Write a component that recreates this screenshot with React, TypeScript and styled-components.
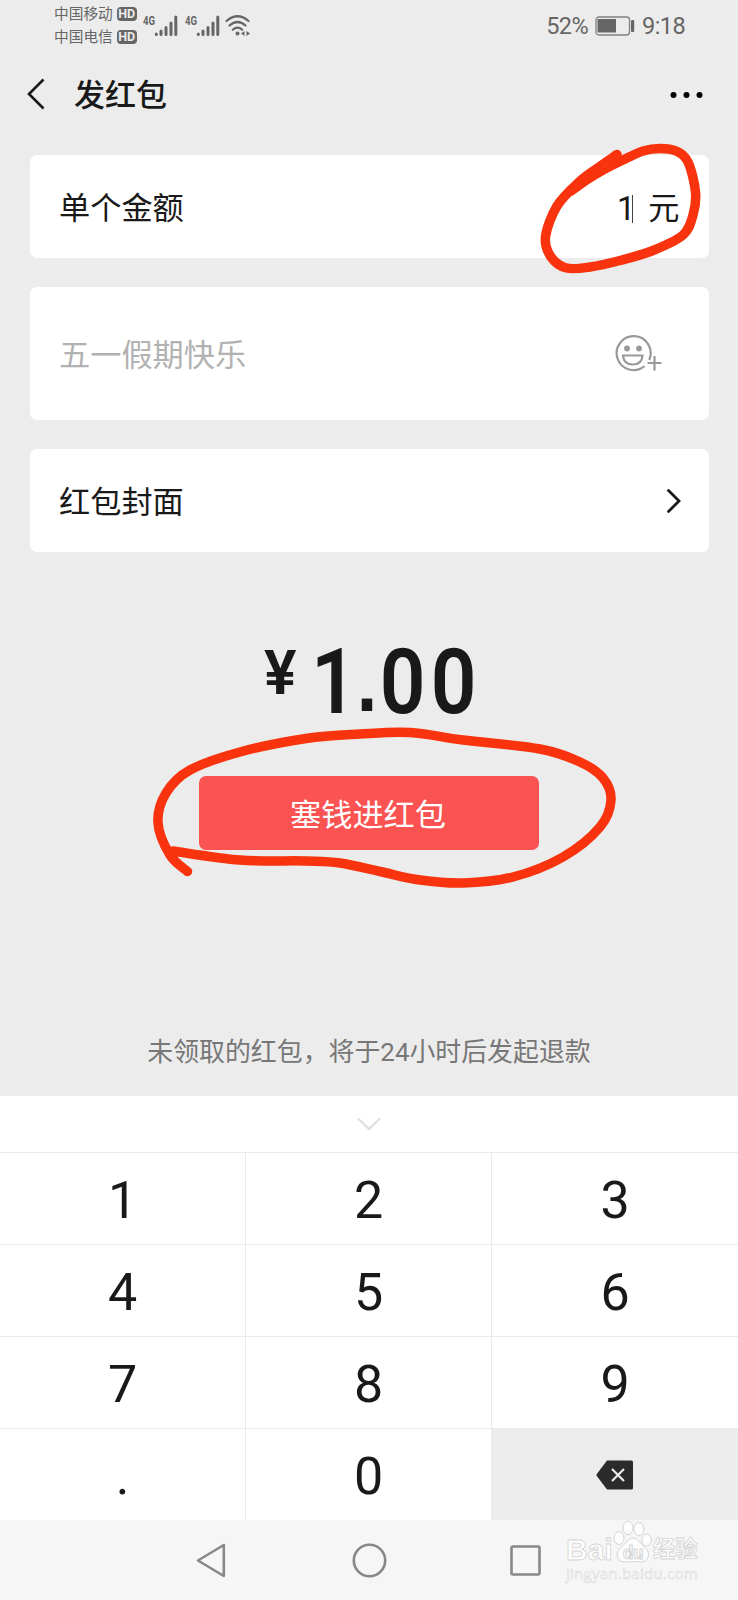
import React from "react";
import styled, { createGlobalStyle } from "styled-components";

const GlobalStyle = createGlobalStyle`
  * { box-sizing: border-box; }
  body {
    margin: 0;
    background: #ececec;
    font-family: Roboto, "Noto Sans CJK SC", sans-serif;
    color: #191919;
  }
  svg { display: block; }
`;

const Screen = styled.div`
  position: relative;
  display: flex;
  flex-direction: column;
  width: 738px;
  height: 1600px;
  overflow: hidden;
  background: #ececec;
`;

const StatusBar = styled.header`
  display: flex;
  align-items: center;
  height: 50px;
  padding: 1px 53px 0 54px;
  color: #666;
`;

const Carriers = styled.div`
  display: flex;
  flex-direction: column;
`;

const Carrier = styled.div`
  display: flex;
  align-items: center;
  gap: 4px;
  height: 22.5px;
  font-size: 14.7px;
  line-height: 22px;
`;

const HdBadge = styled.span`
  display: flex;
  align-items: center;
  justify-content: center;
  width: 20px;
  height: 14px;
  border-radius: 4px;
  background: #666;
  color: #ececec;
  font-size: 12.5px;
  font-weight: 700;
  line-height: 14px;
`;

const Signals = styled.div`
  display: flex;
  flex: 1;
  margin-left: 6px;
`;

const Clock = styled.div`
  display: flex;
  align-items: center;
  font-size: 23.5px;
  letter-spacing: -0.6px;
`;

const BatteryIcon = styled.svg`
  margin: 0 7px 0 7px;
`;

const TitleBar = styled.nav`
  display: flex;
  align-items: center;
  height: 105px;
  padding: 0 34px 17px 26px;
`;

const Title = styled.h1`
  flex: 1;
  margin: 4px 0 0 26px;
  font-size: 31px;
  font-weight: 500;
  line-height: 44px;
`;

const Form = styled.main`
  display: flex;
  flex-direction: column;
  gap: 29.5px;
  padding: 0 29px 0 29.5px;
`;

const Card = styled.section<{ $height: number }>`
  display: flex;
  align-items: center;
  justify-content: space-between;
  height: ${(p) => p.$height}px;
  padding: 5px 29.5px 0 29.5px;
  border-radius: 7px;
  background: #fff;
  font-size: 31.2px;
  line-height: 44px;
`;

const Placeholder = styled.span`
  padding-top: 1px;
  color: #b2b2b2;
`;

const AmountField = styled.div`
  display: flex;
  align-items: center;
`;

const Digits = styled.span`
  font-size: 32.5px;
`;

const Caret = styled.span`
  width: 1px;
  height: 28px;
  margin: 0 15px 0 -3px;
  background: #444;
`;

const ArrowIcon = styled.svg`
  margin: -4px -1.5px 0 0;
`;

const SmileyIcon = styled.svg`
  margin-top: -1px;
`;

const Total = styled.div`
  display: flex;
  justify-content: center;
  height: 106px;
  margin-top: 77px;
  font-weight: 600;
`;

const Currency = styled.span`
  margin-right: 14.5px;
  font-size: 61px;
  line-height: 89px;
`;

const Sum = styled.span`
  display: flex;
  width: 163px;
  font-size: 91px;
  line-height: 106px;
  transform: scaleX(0.88);
  transform-origin: left;
`;

const Cents = styled.span`
  letter-spacing: 6px;
`;

const DecimalPoint = styled.span`
  flex: none;
  width: 26px;
  font-family: "Liberation Sans", sans-serif;
  font-size: 84px;
  font-weight: 700;
`;

const SendButton = styled.button`
  align-self: center;
  width: 340px;
  height: 74px;
  margin: 40.5px 0 0;
  padding: 0 2px 0 0;
  border: 0;
  border-radius: 7px;
  background: #fb5252;
  color: #fff;
  font: inherit;
  font-size: 31.2px;
`;

const Notice = styled.p`
  margin: 183px 0 0;
  height: 63px;
  color: #777;
  font-size: 25.9px;
  line-height: 38px;
  text-align: center;
`;

const Keyboard = styled.div`
  display: flex;
  flex-direction: column;
  height: 424px;
  background: #fff;
`;

const Collapse = styled.div`
  display: flex;
  justify-content: center;
  height: 56px;
  padding-top: 20px;
`;

const Keys = styled.div`
  display: grid;
  grid-template-columns: 246px 246px 246px;
  grid-auto-rows: 92px;
`;

const Key = styled.div<{ $filled?: boolean }>`
  display: flex;
  align-items: center;
  justify-content: center;
  padding-top: ${(p) => (p.$filled ? 1 : 6)}px;
  border-top: 1px solid #ebebeb;
  border-right: 1px solid #ebebeb;
  background: ${(p) => (p.$filled ? "#ececec" : "#fff")};
  font-size: 52px;
  line-height: 60px;
  &:nth-child(3n) { border-right: 0; }
`;

const NavBar = styled.footer`
  display: flex;
  align-items: center;
  height: 80px;
  padding-left: 195px;
  background: #f6f6f6;
`;

const HomeIcon = styled.svg`
  margin: 0 121px 0 125px;
`;

const Ink = styled.svg`
  position: absolute;
  inset: 0;
  pointer-events: none;
`;

const Watermark = styled.div`
  position: absolute;
  left: 566px;
  top: 1518px;
  display: flex;
  flex-direction: column;
  color: #fdfdfd;
  font-weight: 700;
  -webkit-text-stroke: 0.8px #d4d4d4;
`;

const WatermarkBrand = styled.div`
  display: flex;
  align-items: flex-start;
  height: 47px;
`;

const WatermarkText = styled.span<{ $size: number }>`
  margin-top: 18px;
  font-family: "Liberation Sans", "Noto Sans CJK SC", sans-serif;
  font-size: ${(p) => p.$size}px;
  line-height: 28px;
`;

const WatermarkUrl = styled.div`
  font-family: "Open Sans", sans-serif;
  font-size: 15px;
  font-weight: 400;
  line-height: 17px;
  letter-spacing: 0.25px;
  -webkit-text-stroke: 0.5px #d6d6d6;
`;

type Point = [number, number];

/* Catmull-Rom interpolation of a pen stroke, as cubic segments. */
function smooth(points: Point[]): string {
  let d = `M${points[0][0]} ${points[0][1]}`;
  for (let i = 0; i < points.length - 1; i++) {
    const a = points[i - 1] ?? points[i];
    const b = points[i];
    const c = points[i + 1];
    const e = points[i + 2] ?? c;
    d += ` C${b[0] + (c[0] - a[0]) / 6} ${b[1] + (c[1] - a[1]) / 6} ${c[0] - (e[0] - b[0]) / 6} ${c[1] - (e[1] - b[1]) / 6} ${c[0]} ${c[1]}`;
  }
  return d;
}

const amountLoop: Point[] = [
  [617, 154.5], [599, 167], [579, 182], [557, 206], [545.5, 237], [551, 257], [566.5, 268],
  [590, 267], [620, 260.5], [653, 250.5], [683, 235], [693, 215], [695.5, 192], [688, 162],
  [676, 151], [660, 148.5], [643, 151], [625, 159], [603, 170], [588, 179], [571, 191],
];

const buttonLoop: Point[] = [
  [187.5, 871.5], [170, 855], [158, 823], [166, 793], [190, 770], [240, 752], [306, 738.5],
  [360, 734], [410, 732.5], [463, 740], [540, 749], [580, 762], [603, 778], [611, 800],
  [600, 827], [563, 857], [513, 877], [463, 883], [420, 880], [380, 871.5], [340, 863],
  [306, 861], [240, 860], [173, 851],
];

const SignalIcon = ({ width }: { width: number }) => (
  <svg width={width} height="28" viewBox={`0 0 ${width} 28`}>
    <text x="0" y="13" fontFamily="Roboto, sans-serif" fontWeight="700" fontSize="13" textLength="12" lengthAdjust="spacingAndGlyphs" fill="#666">4G</text>
    <g stroke="#666" strokeWidth="3" strokeLinecap="round">
      <path d="M13.3 22v.5M18 19v3.5M23 15.500v7M28 11v11.500M32.800 5v17.500" />
    </g>
  </svg>
);

const WifiIcon = () => (
  <svg width="26" height="28" viewBox="0 0 26 28" fill="none" stroke="#666" strokeWidth="2.2" strokeLinecap="round">
    <path d="M1.500 9Q12.500 -.500 23.500 9M4.500 13.500Q12.500 6.500 20.500 13.500M7.800 17.800Q12.500 13.500 17.200 17.800" />
    <circle cx="12.500" cy="21.500" r="2" fill="#666" stroke="none" />
    <path d="M19.500 19v5l-3.500-2.500ZM21.500 19v5l3.500-2.500Z" fill="#666" stroke="none" />
  </svg>
);

const keys = ["1", "2", "3", "4", "5", "6", "7", "8", "9", ".", "0"];

export default function App() {
  return (
    <Screen lang="zh-CN">
      <GlobalStyle />
      <StatusBar>
        <Carriers>
          <Carrier>中国移动<HdBadge>HD</HdBadge></Carrier>
          <Carrier>中国电信<HdBadge>HD</HdBadge></Carrier>
        </Carriers>
        <Signals>
          <SignalIcon width={42} />
          <SignalIcon width={40} />
          <WifiIcon />
        </Signals>
        <Clock>
          52%
          <BatteryIcon width="40" height="20" viewBox="0 0 40 20" fill="none">
            <rect x="1" y="1" width="33.500" height="18" rx="3" stroke="#808080" strokeWidth="1.300" />
            <rect x="2.500" y="3" width="18.500" height="13.500" fill="#666" />
            <rect x="36" y="4" width="3.200" height="12" rx="1" fill="#666" />
          </BatteryIcon>
          9:18
        </Clock>
      </StatusBar>

      <TitleBar>
        <svg width="22" height="34" viewBox="0 0 22 34" fill="none" stroke="#191919" strokeWidth="2.600">
          <path d="M17.500 2.500L3 17L17.500 31.500" />
        </svg>
        <Title>发红包</Title>
        <svg width="34" height="8" viewBox="0 0 34 8" fill="#000">
          <circle cx="3.500" cy="5" r="3" />
          <circle cx="16.500" cy="5" r="3" />
          <circle cx="29.500" cy="5" r="3" />
        </svg>
      </TitleBar>

      <Form>
        <Card $height={102.5}>
          单个金额
          <AmountField>
            <Digits>1</Digits><Caret />元
          </AmountField>
        </Card>
        <Card $height={132.5}>
          <Placeholder>五一假期快乐</Placeholder>
          <SmileyIcon width="66" height="40" viewBox="0 0 66 40" fill="none" stroke="#999" strokeWidth="2.200">
            <path d="M35.200 25A17 17 0 1 0 30.500 31.200" />
            <path d="M9 20.500H28.500Q28 29.500 18.800 29.500T9 20.500Z" />
            <path d="M33.500 28H47.500M40.500 21V35.500" />
            <circle cx="13" cy="13.500" r="2.900" fill="#999" stroke="none" />
            <circle cx="25" cy="13.500" r="2.900" fill="#999" stroke="none" />
          </SmileyIcon>
        </Card>
        <Card $height={103}>
          红包封面
          <ArrowIcon width="16" height="26" viewBox="0 0 16 26" fill="none" stroke="#191919" strokeWidth="2.800" strokeLinecap="round">
            <path d="M3.500 2.500L14 13L3.500 23.500" />
          </ArrowIcon>
        </Card>
      </Form>

      <Total>
        <Currency>¥</Currency>
        <Sum>
          <span>1</span>
          <DecimalPoint>.</DecimalPoint>
          <Cents>00</Cents>
        </Sum>
      </Total>
      <SendButton>塞钱进红包</SendButton>
      <Notice>未领取的红包，将于24小时后发起退款</Notice>

      <Keyboard>
        <Collapse>
          <svg width="26" height="16" viewBox="0 0 26 16" fill="none" stroke="#dedede" strokeWidth="2.200">
            <path d="M2 2.500L13 13L24 2.500" />
          </svg>
        </Collapse>
        <Keys>
          {keys.map((k) => (
            <Key key={k}>{k}</Key>
          ))}
          <Key $filled>
            <svg width="38" height="30" viewBox="0 0 38 30">
              <path d="M11 .500H35.500Q37 .500 37 2V28Q37 29.500 35.500 29.500H11L.800 16Q.200 15 .800 14Z" fill="#2b2b2b" />
              <path d="M16 9L28 21M28 9L16 21" stroke="#ececec" strokeWidth="2.200" />
            </svg>
          </Key>
        </Keys>
      </Keyboard>

      <NavBar>
        <svg width="32" height="36" viewBox="0 0 32 36" fill="none" stroke="#888" strokeWidth="2.600" strokeLinejoin="round">
          <path d="M28.800 3V34L3 18.500Z" />
        </svg>
        <HomeIcon width="36" height="36" viewBox="0 0 36 36" fill="none" stroke="#888" strokeWidth="2.600">
          <circle cx="17.500" cy="18.500" r="15.700" />
        </HomeIcon>
        <svg width="34" height="34" viewBox="0 0 34 34" fill="none" stroke="#888" strokeWidth="2.600">
          <rect x="2.500" y="3.500" width="28" height="28" rx="1.500" />
        </svg>
      </NavBar>

      <Watermark>
        <WatermarkBrand>
          <WatermarkText $size={30}>Bai</WatermarkText>
          <svg width="40" height="46" viewBox="0 0 38 46" fill="#fdfdfd" stroke="#d4d4d4" strokeWidth="1">
            <ellipse cx="5" cy="20" rx="5" ry="6.500" />
            <ellipse cx="14" cy="10" rx="5" ry="6.800" />
            <ellipse cx="25" cy="11" rx="5" ry="6.500" />
            <ellipse cx="32.500" cy="22" rx="4.800" ry="6" />
            <path d="M19 20C24 20 26 26 31 29.500C37 34 35 44 27 44C22 43.500 16 43.500 11 44C2 44 1 34 7 29.500C12 26 14 20 19 20Z" />
            <text x="9" y="41" fontSize="18">du</text>
          </svg>
          <WatermarkText $size={22.5}>经验</WatermarkText>
        </WatermarkBrand>
        <WatermarkUrl>jingyan.baidu.com</WatermarkUrl>
      </Watermark>

      <Ink width="738" height="1600" viewBox="0 0 738 1600" fill="none" stroke="#f8330d" strokeWidth="9.500" strokeLinecap="round" strokeLinejoin="round">
        <path d={smooth(amountLoop)} />
        <path d="M617 154.500L577 185L608 167Z" fill="#f8330d" strokeWidth="5" />
        <path d={smooth(buttonLoop)} />
      </Ink>
    </Screen>
  );
}
